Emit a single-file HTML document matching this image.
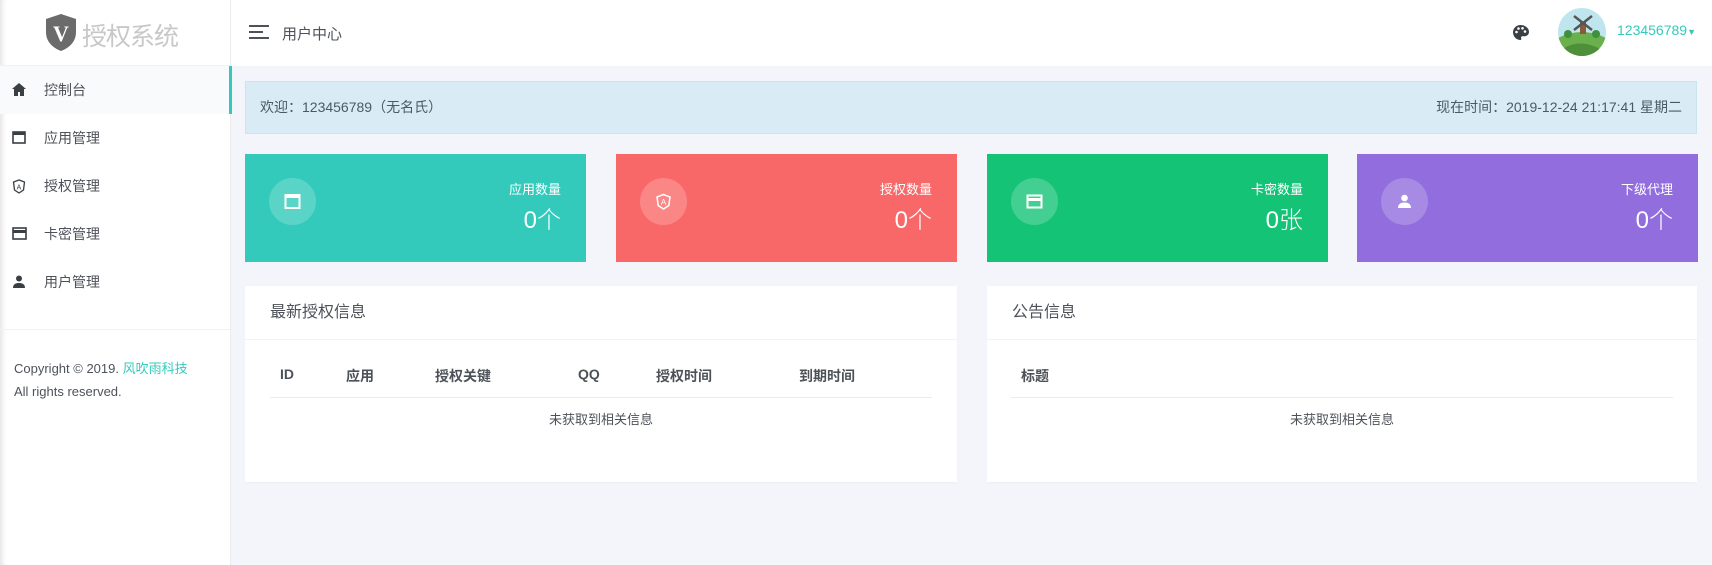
<!DOCTYPE html>
<html><head><meta charset="utf-8"><style>
*{margin:0;padding:0;box-sizing:border-box}
body{width:1712px;height:565px;overflow:hidden;background:#f4f5fa;font-family:"Liberation Sans","Noto Sans CJK SC",sans-serif;color:#4d5259;position:relative;font-size:14px}
.side{position:absolute;left:0;top:0;width:231px;height:565px;background:#fff;border-right:1px solid #ebebeb;box-shadow:inset 6px 0 6px -4px rgba(0,0,0,.12)}
.logo{height:66px;border-bottom:1px solid #f1f2f4;position:relative}
.logo .t{position:absolute;left:82px;top:17px;font-size:25px;color:#c8c8c8;letter-spacing:-1px}
.item{position:absolute;left:0;width:230px;height:48px;line-height:48px;font-size:14px;color:#4d5259}
.item span{position:absolute;left:44px}
.item svg{position:absolute;left:12px;top:17px}
.act{background:#f9fafb}
.act:after{content:"";position:absolute;right:-2px;top:0;width:3px;height:48px;background:#33cabb}
.div{position:absolute;left:0;top:329px;width:230px;border-top:1px solid #f1f2f4}
.copy{position:absolute;left:14px;top:357px;font-size:13px;line-height:23px;color:#4d5259}
.copy a{color:#33cabb;text-decoration:none}
.head{position:absolute;left:231px;top:0;right:0;height:66px;background:#fff}
.alert{position:absolute;left:245px;top:81px;width:1452px;height:53px;background:#d9ecf6;border:1px solid #c9e5f0;font-size:14px;color:#4a5a68;line-height:51px;padding:0 14px}
.card{position:absolute;top:154px;width:341px;height:108px;color:#fff}
.card .c{position:absolute;left:24px;top:24px;width:47px;height:47px;border-radius:50%;background:rgba(255,255,255,.2)}
.card .c svg{position:absolute;left:15px;top:15px}
.card .l{position:absolute;right:25px;top:25px;font-size:13px}
.card .n{position:absolute;right:25px;top:46px;font-size:24px;font-weight:300}
.panel{position:absolute;top:286px;height:196px;background:#fff;box-shadow:0 1px 2px rgba(0,0,0,.03)}
.panel .h{height:54px;border-bottom:1px solid #f1f2f4;padding-left:25px;line-height:54px;font-size:16px;color:#4d5259}
.th{position:absolute;top:366px;font-size:14px;font-weight:bold;color:#4d5259}
.line{position:absolute;top:397px;border-top:1px solid #ebebeb}
.empty{position:absolute;top:409px;font-size:13px;color:#4d5259;text-align:center}
</style></head><body>
<div class="side">
 <div class="logo">
  <svg style="position:absolute;left:45px;top:14px" width="32" height="37" viewBox="0 0 32 37"><path d="M16 0 L31 5 V18 C31 28 24 34 16 37 C8 34 1 28 1 18 V5 Z" fill="#6b6b6b"/><text x="16" y="27" text-anchor="middle" font-family="Liberation Serif" font-weight="bold" font-size="22" fill="#fff">V</text></svg>
  <div class="t">授权系统</div>
 </div>
 <div class="item act" style="top:66px"><svg width="14" height="13" viewBox="0 0 14 13"><path d="M7 0L0 6h2v7h4V9h2v4h4V6h2z" fill="#3a3f44"/></svg><span>控制台</span></div>
 <div class="item" style="top:114px"><svg width="14" height="13" viewBox="0 0 14 13"><rect x="1" y="1" width="12" height="11" fill="none" stroke="#3a3f44" stroke-width="1.6"/><rect x="1" y="1" width="12" height="3" fill="#3a3f44"/></svg><span>应用管理</span></div>
 <div class="item" style="top:162px"><svg width="14" height="15" viewBox="0 0 14 15"><path d="M7 1L1.5 3l1 8L7 14l4.5-3 1-8z" fill="none" stroke="#3a3f44" stroke-width="1.3"/><text x="7" y="10.5" text-anchor="middle" font-size="7" font-family="Liberation Sans" fill="#3a3f44">A</text></svg><span>授权管理</span></div>
 <div class="item" style="top:210px"><svg width="15" height="13" viewBox="0 0 15 13"><rect x="1" y="1" width="13" height="11" fill="none" stroke="#3a3f44" stroke-width="1.6"/><rect x="1" y="3" width="13" height="3" fill="#3a3f44"/></svg><span>卡密管理</span></div>
 <div class="item" style="top:258px"><svg width="14" height="13" viewBox="0 0 14 13"><circle cx="7" cy="3.5" r="3" fill="#3a3f44"/><path d="M1 13c0-4 3-5 6-5s6 1 6 5z" fill="#3a3f44"/></svg><span>用户管理</span></div>
 <div class="div"></div>
 <div class="copy">Copyright © 2019. <a>风吹雨科技</a><br>All rights reserved.</div>
</div>
<div class="head">
 <svg style="position:absolute;left:18px;top:25px" width="20" height="15"><rect y="0" width="20" height="2" fill="#4d5259"/><rect y="6" width="14" height="2" fill="#4d5259"/><rect y="12" width="20" height="2" fill="#4d5259"/></svg>
 <div style="position:absolute;left:51px;top:23px;font-size:15px;color:#4d5259">用户中心</div>
 <svg style="position:absolute;left:1281px;top:24px" width="17" height="17" viewBox="0 0 17 17"><path d="M8.5 1C4.4 1 1 4.2 1 8.3c0 4 3.3 7.7 7 7.7 1.2 0 1.6-.8 1.2-1.7-.5-1 .2-2 1.3-2h1.8c2.4 0 4.7-1.6 4.7-4.4C17 4.2 13 1 8.5 1z" fill="#3a3f44"/><circle cx="4.5" cy="8" r="1.3" fill="#fff"/><circle cx="6.5" cy="4.5" r="1.3" fill="#fff"/><circle cx="10.5" cy="4.3" r="1.3" fill="#fff"/><circle cx="13" cy="7.5" r="1.3" fill="#fff"/></svg>
 <svg style="position:absolute;left:1327px;top:8px" width="48" height="48" viewBox="0 0 48 48"><defs><clipPath id="cp"><circle cx="24" cy="24" r="24"/></clipPath></defs><g clip-path="url(#cp)"><rect width="48" height="48" fill="#bfe6ee"/><path d="M0 30 Q24 18 48 30 V48 H0z" fill="#6ab04c"/><path d="M6 40 Q24 30 44 42 V48 H6z" fill="#4e8f3a"/><rect x="22" y="14" width="6" height="12" fill="#8a5a3c"/><path d="M16 8 L34 22 M34 8 L16 22" stroke="#555" stroke-width="2.5"/><circle cx="10" cy="26" r="4" fill="#3f8f3f"/><circle cx="38" cy="26" r="4" fill="#3f8f3f"/></g></svg>
 <div style="position:absolute;left:1386px;top:22px;font-size:14px;color:#33cabb">123456789<span style="font-size:9px">▼</span></div>
</div>
<div class="alert"><span>欢迎：123456789（无名氏）</span><span style="float:right">现在时间：2019-12-24 21:17:41 星期二</span></div>

<div class="card" style="left:245px;background:#33cabb"><div class="c"><svg width="17" height="17" viewBox="0 0 17 17"><rect x="1.5" y="2" width="14" height="13" fill="none" stroke="#fff" stroke-width="2"/><rect x="1.5" y="2" width="14" height="3" fill="#fff"/></svg></div><div class="l">应用数量</div><div class="n">0个</div></div>
<div class="card" style="left:616px;background:#f96868"><div class="c"><svg width="17" height="17" viewBox="0 0 17 17"><path d="M8.5 1.5L2 4l1.2 8.5L8.5 16l5.3-3.5L15 4z" fill="none" stroke="#fff" stroke-width="1.5"/><text x="8.5" y="12" text-anchor="middle" font-size="8" font-family="Liberation Sans" fill="#fff">A</text></svg></div><div class="l">授权数量</div><div class="n">0个</div></div>
<div class="card" style="left:987px;background:#15c377"><div class="c"><svg width="17" height="17" viewBox="0 0 17 17"><rect x="1.5" y="2.5" width="14" height="12" fill="none" stroke="#fff" stroke-width="2"/><rect x="1.5" y="5" width="14" height="3" fill="#fff"/></svg></div><div class="l">卡密数量</div><div class="n">0张</div></div>
<div class="card" style="left:1357px;background:#926dde"><div class="c"><svg width="17" height="17" viewBox="0 0 17 17"><circle cx="8.5" cy="5" r="3.3" fill="#fff"/><path d="M2 15c0-4.5 3.5-5.5 6.5-5.5S15 10.5 15 15z" fill="#fff"/></svg></div><div class="l">下级代理</div><div class="n">0个</div></div>

<div class="panel" style="left:245px;width:712px"><div class="h">最新授权信息</div></div>
<div class="panel" style="left:987px;width:710px"><div class="h">公告信息</div></div>
<div class="th" style="left:280px">ID</div>
<div class="th" style="left:346px">应用</div>
<div class="th" style="left:435px">授权关键</div>
<div class="th" style="left:578px">QQ</div>
<div class="th" style="left:656px">授权时间</div>
<div class="th" style="left:799px">到期时间</div>
<div class="line" style="left:270px;width:662px"></div>
<div class="empty" style="left:270px;width:662px">未获取到相关信息</div>
<div class="th" style="left:1021px">标题</div>
<div class="line" style="left:1011px;width:662px"></div>
<div class="empty" style="left:1011px;width:662px">未获取到相关信息</div>
</body></html>
